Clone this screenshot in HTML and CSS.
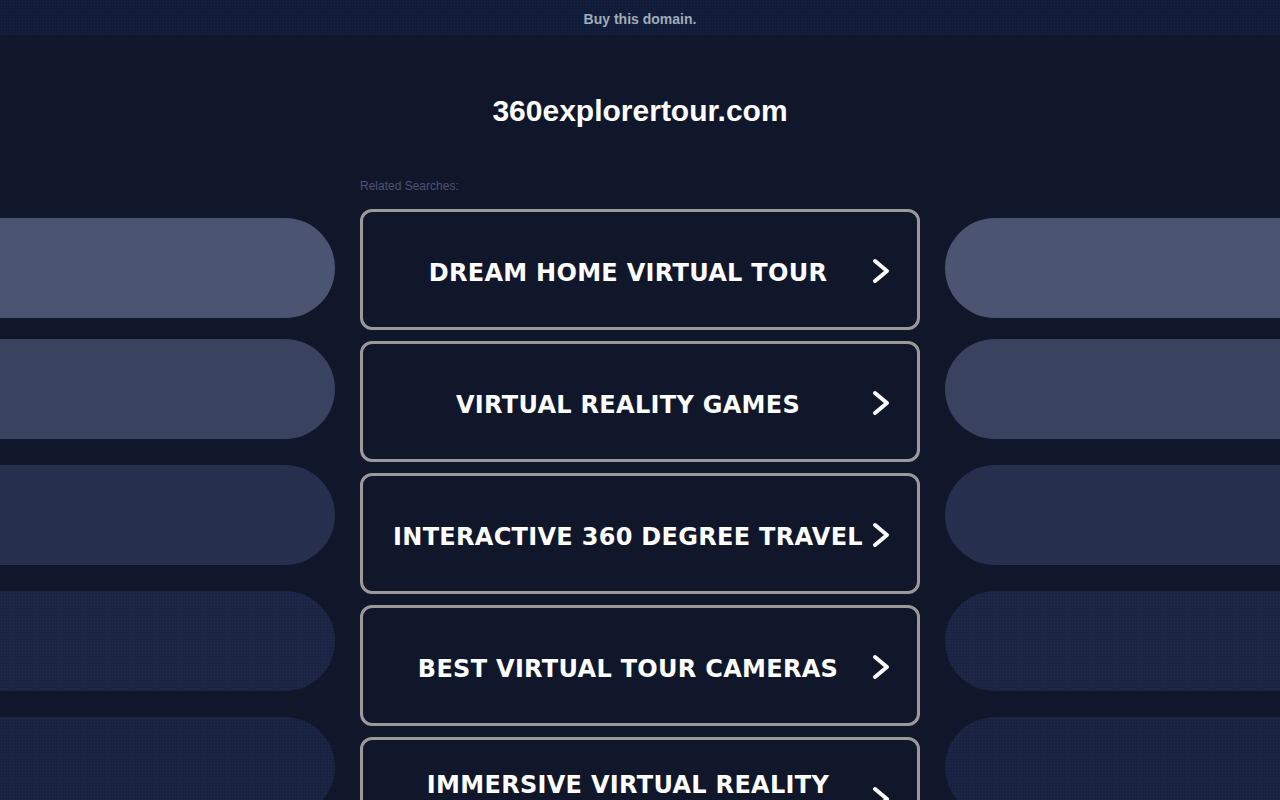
FILE: index.html
```html
<!DOCTYPE html>
<html lang="en">
<head>
<meta charset="utf-8">
<title>360explorertour.com</title>
<link rel="stylesheet" href="styles.css">
</head>
<body>
<div class="topbar"><a class="buy" href="#">Buy this domain.</a></div>
<h1 class="domain">360explorertour.com</h1>
<div class="layout">
  <div class="pills pills-left">
    <div class="pill p1"></div>
    <div class="pill p2"></div>
    <div class="pill p3"></div>
    <div class="pill p4"></div>
    <div class="pill p5"></div>
  </div>
  <div class="center">
    <div class="related">Related Searches:</div>
    <a class="btn" href="#"><span class="btn-text">DREAM HOME VIRTUAL TOUR</span><svg class="chev" viewBox="0 0 18 26" width="18" height="26"><polyline points="3,3 15,13 3,23"/></svg></a>
    <a class="btn" href="#"><span class="btn-text">VIRTUAL REALITY GAMES</span><svg class="chev" viewBox="0 0 18 26" width="18" height="26"><polyline points="3,3 15,13 3,23"/></svg></a>
    <a class="btn" href="#"><span class="btn-text">INTERACTIVE 360 DEGREE TRAVEL</span><svg class="chev" viewBox="0 0 18 26" width="18" height="26"><polyline points="3,3 15,13 3,23"/></svg></a>
    <a class="btn" href="#"><span class="btn-text">BEST VIRTUAL TOUR CAMERAS</span><svg class="chev" viewBox="0 0 18 26" width="18" height="26"><polyline points="3,3 15,13 3,23"/></svg></a>
    <a class="btn" href="#"><span class="btn-text">IMMERSIVE VIRTUAL REALITY EXPERIENCES</span><svg class="chev" viewBox="0 0 18 26" width="18" height="26"><polyline points="3,3 15,13 3,23"/></svg></a>
  </div>
  <div class="pills pills-right">
    <div class="pill p1"></div>
    <div class="pill p2"></div>
    <div class="pill p3"></div>
    <div class="pill p4"></div>
    <div class="pill p5"></div>
  </div>
</div>
</body>
</html>
```
FILE: styles.css
```css
html, body {
  margin: 0;
  padding: 0;
}
body {
  background: #11172b;
  font-family: "Liberation Sans", Arial, sans-serif;
  overflow: hidden;
  height: 800px;
}
.topbar {
  height: 35px;
  background-color: #111d38;
  background-image: radial-gradient(rgba(40, 60, 110, 0.25) 0.6px, transparent 0.8px);
  background-size: 3px 3px;
  display: flex;
  align-items: center;
  justify-content: center;
}
.buy {
  color: #a2abbb;
  font-weight: bold;
  font-size: 14px;
  text-decoration: none;
  line-height: 16px;
  padding-top: 2px;
}
.domain {
  margin: 58px 0 0;
  text-align: center;
  color: #ffffff;
  font-size: 30px;
  line-height: 36px;
  font-weight: bold;
}
.layout {
  display: grid;
  grid-template-columns: 1fr 560px 1fr;
  column-gap: 25px;
  margin-top: 41px;
}
.pills {
  display: flex;
  flex-direction: column;
  padding-top: 48px;
}
.pill {
  height: 100px;
  margin-top: 26px;
}
.pill.p1 { margin-top: 0; background: #4b5571; }
.pill.p2 { margin-top: 21px; background: #39425f; }
.pill.p3 { background: #262f4e; }
.pill.p4 {
  background-color: #1c2443;
  background-image: radial-gradient(rgba(60, 75, 120, 0.25) 0.6px, transparent 0.8px);
  background-size: 3px 3px;
}
.pill.p5 {
  background-color: #1a2241;
  background-image: radial-gradient(rgba(60, 75, 120, 0.25) 0.6px, transparent 0.8px);
  background-size: 3px 3px;
}
.pills-left .pill { border-radius: 0 50px 50px 0; }
.pills-right .pill { border-radius: 50px 0 0 50px; }
.center {
  display: flex;
  flex-direction: column;
}
.related {
  color: #4a5474;
  font-size: 12px;
  line-height: 15px;
  padding-top: 9px;
  margin-bottom: 15px;
}
.btn {
  position: relative;
  display: flex;
  align-items: center;
  justify-content: center;
  box-sizing: border-box;
  min-height: 121px;
  margin-bottom: 11px;
  border: 3px solid #9a9a9a;
  border-radius: 12px;
  background: #11172b;
  padding: 17px 40px 11px 16px;
  text-decoration: none;
}
.btn-text {
  color: #ffffff;
  font-family: "DejaVu Sans", Verdana, sans-serif;
  font-weight: bold;
  font-size: 24px;
  line-height: 32px;
  text-align: center;
  letter-spacing: 0.3px;
}
.chev {
  position: absolute;
  right: 27px;
  top: 50%;
  margin-top: -12px;
}
.chev polyline {
  fill: none;
  stroke: #ffffff;
  stroke-width: 4;
  stroke-linecap: round;
  stroke-linejoin: round;
}
```
